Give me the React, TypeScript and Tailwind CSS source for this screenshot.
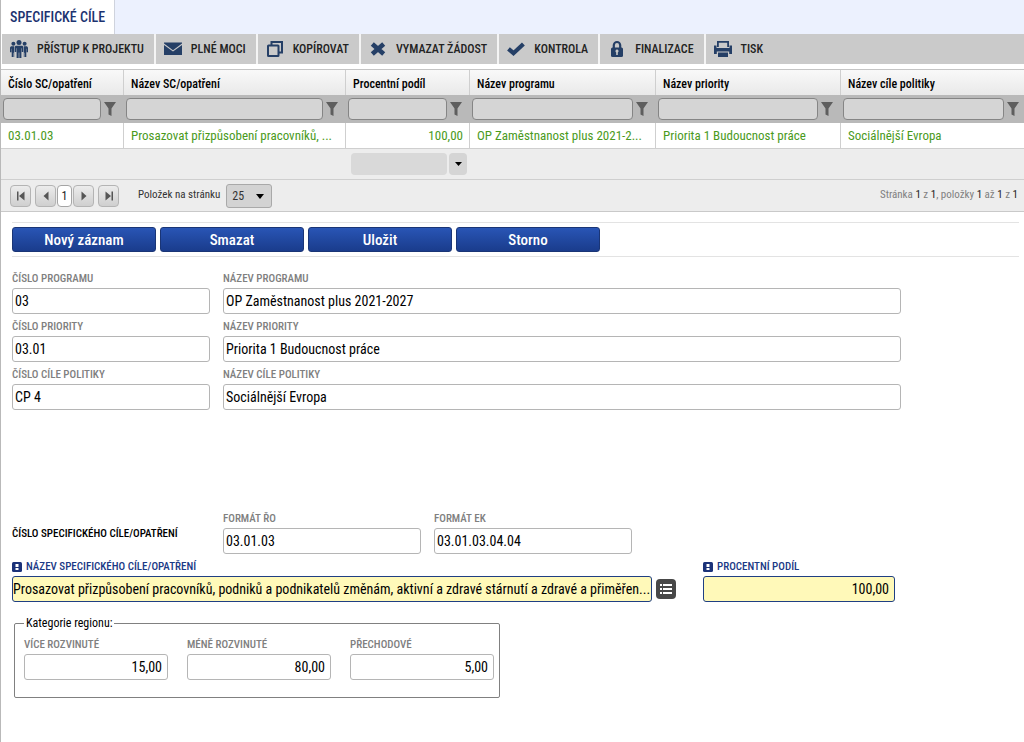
import React from "react";

const PeopleIcon = () => (
  <svg width="18" height="18" viewBox="0 0 18 18" fill="#253f66" aria-hidden="true">
    <circle cx="9" cy="2.6" r="2.5" />
    <circle cx="3.4" cy="3.8" r="2" />
    <circle cx="14.6" cy="3.8" r="2" />
    <path d="M6.400 5.700h5.200c1.200 0 1.700.6 1.700 1.700v4.600h-1.500V8.200h-.4V18H9.300v-5.500h-.6V18H6.600V8.200h-.4V12H4.700V7.400c0-1.100.5-1.700 1.700-1.700z" />
    <path d="M2 6.300h2.200v10.600H3.400v-4.200H3v4.200H1.700V8.800h-.3v3.400H0V8.200c0-1.300.7-1.900 2-1.900zM16 6.300h-2.200v10.600h.8v-4.200h.4v4.200h1.300V8.800h.3v3.400H18V8.200c0-1.300-.7-1.900-2-1.900z" />
  </svg>
);
const MailIcon = () => (
  <svg width="18" height="18" viewBox="0 0 18 18" fill="#253f66" aria-hidden="true">
    <path d="M0 2.500h18v1L9 10.200 0 3.500z" />
    <path d="M0 4.900l9 6.700 9-6.700V15H0z" />
  </svg>
);
const CopyIcon = () => (
  <svg width="18" height="18" viewBox="0 0 18 18" fill="none" stroke="#253f66" strokeWidth="2" aria-hidden="true">
    <path d="M5.500 5V2H16v10.500h-3" />
    <rect x="2" y="5.500" width="10.500" height="10.500" rx="0.500" />
  </svg>
);
const CrossIcon = () => (
  <svg width="18" height="18" viewBox="0 0 18 18" stroke="#253f66" strokeWidth="4.600" aria-hidden="true">
    <path d="M3.300 4l11.400 10M14.700 4L3.300 14" />
  </svg>
);
const CheckIcon = () => (
  <svg width="18" height="18" viewBox="0 0 18 18" fill="none" stroke="#253f66" strokeWidth="4.200" aria-hidden="true">
    <path d="M1.500 8.800l5 4.400L16.400 4" />
  </svg>
);
const LockIcon = () => (
  <svg width="18" height="18" viewBox="0 0 18 18" aria-hidden="true">
    <path d="M5.800 8V5.200a3.200 3.200 0 016.400 0V8" fill="none" stroke="#253f66" strokeWidth="2.200" />
    <rect x="3" y="7.500" width="12" height="9.500" rx="1.500" fill="#253f66" />
    <path d="M9 9.600a1.500 1.500 0 01.8 2.800V15H8.200v-2.600A1.500 1.500 0 019 9.600z" fill="#cacaca" />
  </svg>
);
const PrinterIcon = () => (
  <svg width="18" height="18" viewBox="0 0 18 18" fill="#253f66" aria-hidden="true">
    <path d="M3 1h12v6h-1.800V2.800H4.800V7H3z" />
    <path d="M0 5.500h2.500V8h13V5.500H18V14h-2.800v-2.600H2.800V14H0z" />
    <path d="M4 12.500h10V17H4z" />
  </svg>
);

const Funnel = () => (
  <button type="button" aria-label="Filtr" className="flex h-5 w-4 shrink-0 items-center justify-center">
    <svg width="12" height="14" viewBox="0 0 12 14" fill="#5e5e5e" aria-hidden="true">
      <path d="M0 0h12L7.500 6.500V14l-3-1.500v-6z" />
    </svg>
  </button>
);

const tools = [
  { label: "PŘÍSTUP K PROJEKTU", Icon: PeopleIcon },
  { label: "PLNÉ MOCI", Icon: MailIcon },
  { label: "KOPÍROVAT", Icon: CopyIcon },
  { label: "VYMAZAT ŽÁDOST", Icon: CrossIcon },
  { label: "KONTROLA", Icon: CheckIcon },
  { label: "FINALIZACE", Icon: LockIcon },
  { label: "TISK", Icon: PrinterIcon },
];

const columns = [
  { title: "Číslo SC/opatření", value: "03.01.03", width: "w-[123px]" },
  { title: "Název SC/opatření", value: "Prosazovat přizpůsobení pracovníků, ...", width: "w-[222px]" },
  { title: "Procentní podíl", value: "100,00", width: "w-[124px]", right: true },
  { title: "Název programu", value: "OP Zaměstnanost plus 2021-2...", width: "w-[186px]" },
  { title: "Název priority", value: "Priorita 1 Budoucnost práce", width: "w-[185px]" },
  { title: "Název cíle politiky", value: "Sociálnější Evropa", width: "w-[183px]" },
];

const pagerButton =
  "flex h-[22px] w-[21px] items-center justify-center rounded-sm border border-[#b4b4b4] bg-linear-to-b from-[#ececec] to-[#cfcfcf]";

function Pager({ label, d }: { label: string; d: string }) {
  return (
    <button type="button" aria-label={label} className={pagerButton}>
      <svg width="10" height="10" viewBox="0 0 10 10" fill="#555" aria-hidden="true">
        <path d={d} />
      </svg>
    </button>
  );
}

type FieldProps = {
  id: string;
  label: string;
  value: string;
  right?: boolean;
  required?: boolean;
  className?: string;
};

function Field({ id, label, value, right, required, className = "" }: FieldProps) {
  return (
    <div className={`flex min-w-0 flex-col ${className}`}>
      <label
        htmlFor={id}
        className={`flex h-5 items-center gap-1 pt-0.5 text-[11px] font-medium whitespace-nowrap ${required ? "text-[#1b3a86]" : "text-[#808080]"}`}
      >
        {required && (
          <svg width="10" height="10" viewBox="0 0 10 10" aria-hidden="true">
            <rect width="10" height="10" rx="1.500" fill="#1b3279" />
            <path d="M3.500 2h3v3h-3zM3.500 6h3v2h-3z" fill="#fff" />
          </svg>
        )}
        {label}
      </label>
      <input
        id={id}
        defaultValue={value}
        className={`h-[26px] w-full min-w-0 rounded-[3px] border text-sm text-black ${
          required ? "border-[#1f3f83] bg-[#fff9b9]" : "border-[#b5b5b5] bg-white px-0.5"
        } ${right ? "pr-[5px] text-right" : ""}`}
      />
    </div>
  );
}

export default function App() {
  return (
    <div className="min-h-screen overflow-x-hidden border-l border-[#b9b9b9] bg-white font-['Roboto_Condensed','Liberation_Sans_Narrow',Roboto,sans-serif] text-black">
      <header className="flex h-[34px] bg-[#ecf1fe]">
        <h1 className="flex items-center border-r border-[#cfd3dd] bg-white px-[9px] text-sm font-medium text-[#1c3370]">
          SPECIFICKÉ CÍLE
        </h1>
      </header>

      <nav className="ml-px flex h-[30px] bg-[#cacaca]">
        {tools.map(({ label, Icon }, i) => (
          <button
            key={label}
            type="button"
            className={`flex items-center gap-[9px] pr-2.5 pl-2 text-xs font-medium whitespace-nowrap text-[#222] ${
              i < tools.length - 1 ? "border-r-2 border-[#f4f4f4]" : ""
            }`}
          >
            <Icon />
            {label}
          </button>
        ))}
      </nav>

      <table className="mt-[5px] w-full table-fixed border-separate border-spacing-0 border-t border-[#c4c4c4]">
        <thead>
          <tr className="h-[25px] bg-linear-to-b from-[#f9f9f9] to-[#e9e9e9]">
            {columns.map((c) => (
              <th
                key={c.title}
                className={`${c.width} border-r border-[#cfcfcf] pt-0.5 pr-1.5 pl-[7px] text-left text-xs font-medium whitespace-nowrap last:border-r-0`}
              >
                {c.title}
              </th>
            ))}
          </tr>
          <tr className="h-7 bg-[#b9b9b9]">
            {columns.map((c) => (
              <td key={c.title} className="pr-1.5 pl-0.5 last:pr-[3px]">
                <div className="flex items-center gap-px">
                  <input
                    aria-label={`Filtr: ${c.title}`}
                    className="h-[22px] w-full min-w-0 flex-1 rounded-sm border border-[#858585] bg-[#d5d5d5] px-1 text-sm"
                  />
                  <Funnel />
                </div>
              </td>
            ))}
          </tr>
        </thead>
        <tbody>
          <tr className="h-[26px]">
            {columns.map((c) => (
              <td
                key={c.title}
                className={`truncate border-r border-b border-[#cfcfcf] pr-1.5 pl-[7px] text-[13px] text-[#4a9a1c] last:border-r-0 ${c.right ? "text-right" : ""}`}
              >
                {c.value}
              </td>
            ))}
          </tr>
        </tbody>
        <tfoot>
          <tr className="h-[31px] bg-[#ededed]">
            <td colSpan={2} className="border-b border-[#cfcfcf]" />
            <td className="border-b border-[#cfcfcf] pr-[3px] pl-[5px]">
              <div className="flex gap-0.5">
                <input aria-label="Souhrn" className="h-[22px] min-w-0 flex-1 rounded-sm bg-[#d9d9d9] px-1 text-sm" />
                <button
                  type="button"
                  aria-label="Vybrat souhrn"
                  className="flex h-[22px] w-[18px] items-center justify-center rounded-sm bg-[#d5d5d5]"
                >
                  <svg width="7" height="4" viewBox="0 0 7 4" aria-hidden="true">
                    <path d="M0 0h7L3.500 4z" />
                  </svg>
                </button>
              </div>
            </td>
            <td colSpan={3} className="border-b border-[#cfcfcf]" />
          </tr>
        </tfoot>
      </table>

      <div className="flex h-8 items-center border-b border-[#c9c9c9] bg-[#ededed] pr-1.5 pl-[9px] text-[11px] text-[#333]">
        <div className="flex items-center">
          <Pager label="První stránka" d="M1 0.500h1.500v9H1zM8.500 0.500v9L3 5z" />
          <span className="w-1" />
          <Pager label="Předchozí stránka" d="M7.500 0.500v9L2.500 5z" />
          <button
            type="button"
            className="mx-px h-[22px] w-[15px] rounded-sm border border-[#a5a5a5] bg-white text-center text-xs text-[#222]"
          >
            1
          </button>
          <Pager label="Další stránka" d="M2.500 0.500v9l5-4.500z" />
          <span className="w-1" />
          <Pager label="Poslední stránka" d="M7.500 0.500H9v9H7.500zM1.500 0.500v9L7 5z" />
        </div>
        <label htmlFor="page-size" className="ml-[19px]">
          Položek na stránku
        </label>
        <div className="relative ml-1.5">
          <select
            id="page-size"
            className="block h-6 w-[46px] appearance-none rounded-[3px] border border-[#a9a9a9] bg-[#d3d3d3] pl-[5px] text-xs text-[#333]"
          >
            <option>25</option>
            <option>50</option>
          </select>
          <svg
            className="pointer-events-none absolute top-2.5 right-2"
            width="8"
            height="5"
            viewBox="0 0 8 5"
            aria-hidden="true"
          >
            <path d="M0 0h8L4 5z" />
          </svg>
        </div>
        <p className="ml-auto text-[#808080]">
          Stránka <b className="font-normal text-[#222]">1</b> z <b className="font-normal text-[#222]">1</b>, položky{" "}
          <b className="font-normal text-[#222]">1</b> až <b className="font-normal text-[#222]">1</b> z{" "}
          <b className="font-normal text-[#222]">1</b>
        </p>
      </div>

      <main className="px-[11px] pt-2.5">
        <div className="-mr-1.5 flex h-[35px] items-center gap-1 border-y border-[#e3e3e3]">
          {["Nový záznam", "Smazat", "Uložit", "Storno"].map((t) => (
            <button
              key={t}
              type="button"
              className="h-[25px] w-36 rounded-[3px] border border-[#1a3576] bg-linear-to-b from-[#2955b5] to-[#1a3c8c] text-[15px] leading-5 font-medium text-white"
            >
              {t}
            </button>
          ))}
        </div>

        <form>
          <div className="mt-[11px] grid grid-cols-[198px_minmax(0,678px)] gap-x-[13px] gap-y-0.5">
            <Field id="program-no" label="ČÍSLO PROGRAMU" value="03" />
            <Field id="program-name" label="NÁZEV PROGRAMU" value="OP Zaměstnanost plus 2021-2027" />
            <Field id="priority-no" label="ČÍSLO PRIORITY" value="03.01" />
            <Field id="priority-name" label="NÁZEV PRIORITY" value="Priorita 1 Budoucnost práce" />
            <Field id="policy-no" label="ČÍSLO CÍLE POLITIKY" value="CP 4" />
            <Field id="policy-name" label="NÁZEV CÍLE POLITIKY" value="Sociálnější Evropa" />
          </div>

          <div className="mt-[98px] grid grid-cols-[198px_198px_198px] items-center gap-x-[13px]">
            <span className="pt-1.5 text-[11px] font-medium whitespace-nowrap">ČÍSLO SPECIFICKÉHO CÍLE/OPATŘENÍ</span>
            <Field id="format-ro" label="FORMÁT ŘO" value="03.01.03" />
            <Field id="format-ek" label="FORMÁT EK" value="03.01.03.04.04" />
          </div>

          <div className="mt-0.5 flex items-end">
            <Field
              id="goal-name"
              required
              label="NÁZEV SPECIFICKÉHO CÍLE/OPATŘENÍ"
              value="Prosazovat přizpůsobení pracovníků, podniků a podnikatelů změnám, aktivní a zdravé stárnutí a zdravé a přiměřen..."
              className="w-[640px]"
            />
            <button
              type="button"
              aria-label="Vybrat ze seznamu"
              className="mr-[27px] mb-[3px] ml-1 flex size-5 shrink-0 items-center justify-center rounded-sm bg-[#484848]"
            >
              <svg width="12" height="10" viewBox="0 0 12 10" fill="#fff" aria-hidden="true">
                <path d="M0 0h2v2H0zM3 0h9v2H3zM0 4h2v2H0zM3 4h9v2H3zM0 8h2v2H0zM3 8h9v2H3z" />
              </svg>
            </button>
            <Field id="share" required right label="PROCENTNÍ PODÍL" value="100,00" className="w-48" />
          </div>

          <fieldset className="mt-[11px] ml-0.5 h-[85px] w-[486px] rounded-xs border border-[#808080] pr-[5px] pl-[9px]">
            <legend className="px-0.5 text-xs leading-5">Kategorie regionu:</legend>
            <div className="grid grid-cols-3 gap-x-[19px] pt-px">
              <Field id="more" right label="VÍCE ROZVINUTÉ" value="15,00" />
              <Field id="less" right label="MÉNĚ ROZVINUTÉ" value="80,00" />
              <Field id="transition" right label="PŘECHODOVÉ" value="5,00" />
            </div>
          </fieldset>
        </form>
      </main>
    </div>
  );
}
